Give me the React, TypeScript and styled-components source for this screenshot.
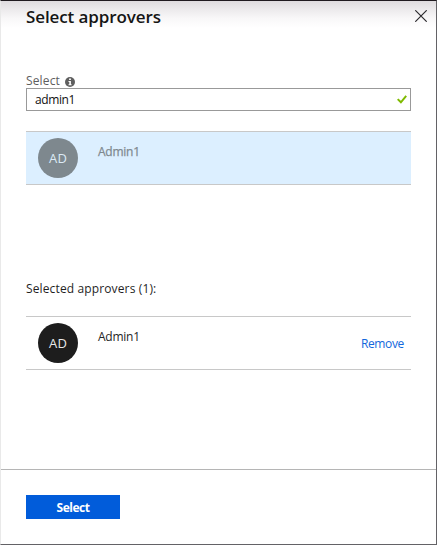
import React from "react";
import styled, { createGlobalStyle } from "styled-components";

const GlobalStyle = createGlobalStyle`
  html, body { margin: 0; padding: 0; background: #fff; overflow: hidden; }
  *, *::before, *::after { box-sizing: border-box; }
`;

const Panel = styled.section`
  width: 437px;
  height: 545px;
  display: flex;
  flex-direction: column;
  border: 1px solid #636266;
  border-top-color: #1f1a1f;
  border-left-color: #e9e9e9;
  background: linear-gradient(#dedbde 0, #ebe9eb 8px, #f8f7f8 17px, #fff 27px);
  color: #1f1f1f;
  font-family: "Segoe UI", "Open Sans", "Noto Sans", sans-serif;
  font-size: 12px;
  line-height: 16px;
`;

const Header = styled.header`
  height: 72px;
  padding: 4px 9px 0 25px;
  display: flex;
  align-items: flex-start;
  justify-content: space-between;
`;

const Title = styled.h1`
  margin: 0;
  font-size: 17px;
  line-height: 24px;
  font-weight: 600;
  letter-spacing: -0.1px;
  color: #151515;
  white-space: nowrap;
`;

const CloseButton = styled.button`
  margin: 5px 0 0;
  padding: 0;
  width: 12px;
  height: 12px;
  border: 0;
  background: none;
  svg { display: block; }
`;

const Content = styled.main`
  flex: 1;
  padding: 0 25px;
`;

const FieldLabel = styled.label`
  height: 15px;
  display: flex;
  align-items: center;
  gap: 5px;
  color: #5e5e5e;
  letter-spacing: 0.15px;
  svg { display: block; margin-top: 3px; }
`;

const Field = styled.div`
  width: 385px;
  height: 23px;
  border: 1px solid #999;
  background: #fff;
  padding: 0 3px 0 8px;
  display: flex;
  align-items: center;
  justify-content: space-between;
`;

const FieldInput = styled.input`
  flex: 1;
  min-width: 0;
  padding: 1px 0 0;
  border: 0;
  outline: 0;
  background: transparent;
  font: inherit;
  letter-spacing: -0.4px;
  color: #111;
`;

const PersonRow = styled.div<{ $picked?: boolean }>`
  width: 385px;
  height: 54px;
  padding: 6px 7px 0 12px;
  display: flex;
  align-items: flex-start;
  border: solid #c8c8c8;
  border-width: 1px 0;
  background: ${(p) => (p.$picked ? "#dcefff" : "transparent")};
  color: ${(p) => (p.$picked ? "#7f898f" : "#252525")};
`;

const Results = styled.div`
  padding-top: 20px;
  height: 170px;
`;

const Avatar = styled.div<{ $dim?: boolean }>`
  width: 40px;
  height: 40px;
  border-radius: 50%;
  display: flex;
  align-items: center;
  justify-content: center;
  background: ${(p) => (p.$dim ? "#7e888e" : "#1d1d1d")};
  color: ${(p) => (p.$dim ? "#dceaf5" : "#e8e8e8")};
  font-size: 13px;
  letter-spacing: 0.1px;
`;

const Name = styled.span<{ $strong?: boolean }>`
  margin: 6px 0 0 20px;
  flex: 1;
  letter-spacing: -0.25px;
  -webkit-text-stroke: ${(p) => (p.$strong ? "0.25px" : "0")} currentColor;
`;

const RemoveLink = styled.a`
  margin-top: 13px;
  color: #1267dc;
  letter-spacing: -0.35px;
`;

const SectionLabel = styled.p`
  margin: 0 0 19px;
  letter-spacing: 0.13px;
`;

const Footer = styled.footer`
  height: 75px;
  padding: 25px 25px 0;
  border-top: 1px solid #b5b5b5;
`;

const PrimaryButton = styled.button`
  display: block;
  width: 94px;
  height: 24px;
  padding: 1px 0 0;
  border: 0;
  background: #015cda;
  color: #fff;
  font: 700 12px/23px "Segoe UI", "Open Sans", "Noto Sans", sans-serif;
  letter-spacing: -0.5px;
`;

const CloseIcon = () => (
  <svg width="12" height="12" viewBox="0 0 12 12" fill="none">
    <path d="M0.3 0.3 11.7 11.7M11.7 0.3 0.3 11.7" stroke="#29272b" strokeWidth="1.15" />
  </svg>
);

const InfoIcon = () => (
  <svg width="10" height="10" viewBox="0 0 10 10">
    <circle cx="5" cy="5" r="5" fill="#5f5f5f" />
    <path d="M4.1 1.6h1.8v1.5H4.1zM3.5 4h2.4v3.3h.7v1H3.5v-1h.8V5h-.8z" fill="#fff" />
  </svg>
);

const CheckIcon = () => (
  <svg width="10" height="9" viewBox="0 0 10 9" fill="none">
    <path d="M0.7 4.1 3.9 7.3 9.2 0.9" stroke="#7fba00" strokeWidth="2" />
  </svg>
);

export default function App() {
  return (
    <>
      <GlobalStyle />
      <Panel>
        <Header>
          <Title>Select approvers</Title>
          <CloseButton aria-label="Close">
            <CloseIcon />
          </CloseButton>
        </Header>
        <Content>
          <FieldLabel htmlFor="approver">
            Select
            <InfoIcon />
          </FieldLabel>
          <Field>
            <FieldInput id="approver" defaultValue="admin1" />
            <CheckIcon />
          </Field>
          <Results>
            <PersonRow $picked>
              <Avatar $dim>AD</Avatar>
              <Name $strong>Admin1</Name>
            </PersonRow>
          </Results>
          <SectionLabel>Selected approvers (1):</SectionLabel>
          <PersonRow>
            <Avatar>AD</Avatar>
            <Name>Admin1</Name>
            <RemoveLink>Remove</RemoveLink>
          </PersonRow>
        </Content>
        <Footer>
          <PrimaryButton>Select</PrimaryButton>
        </Footer>
      </Panel>
    </>
  );
}
